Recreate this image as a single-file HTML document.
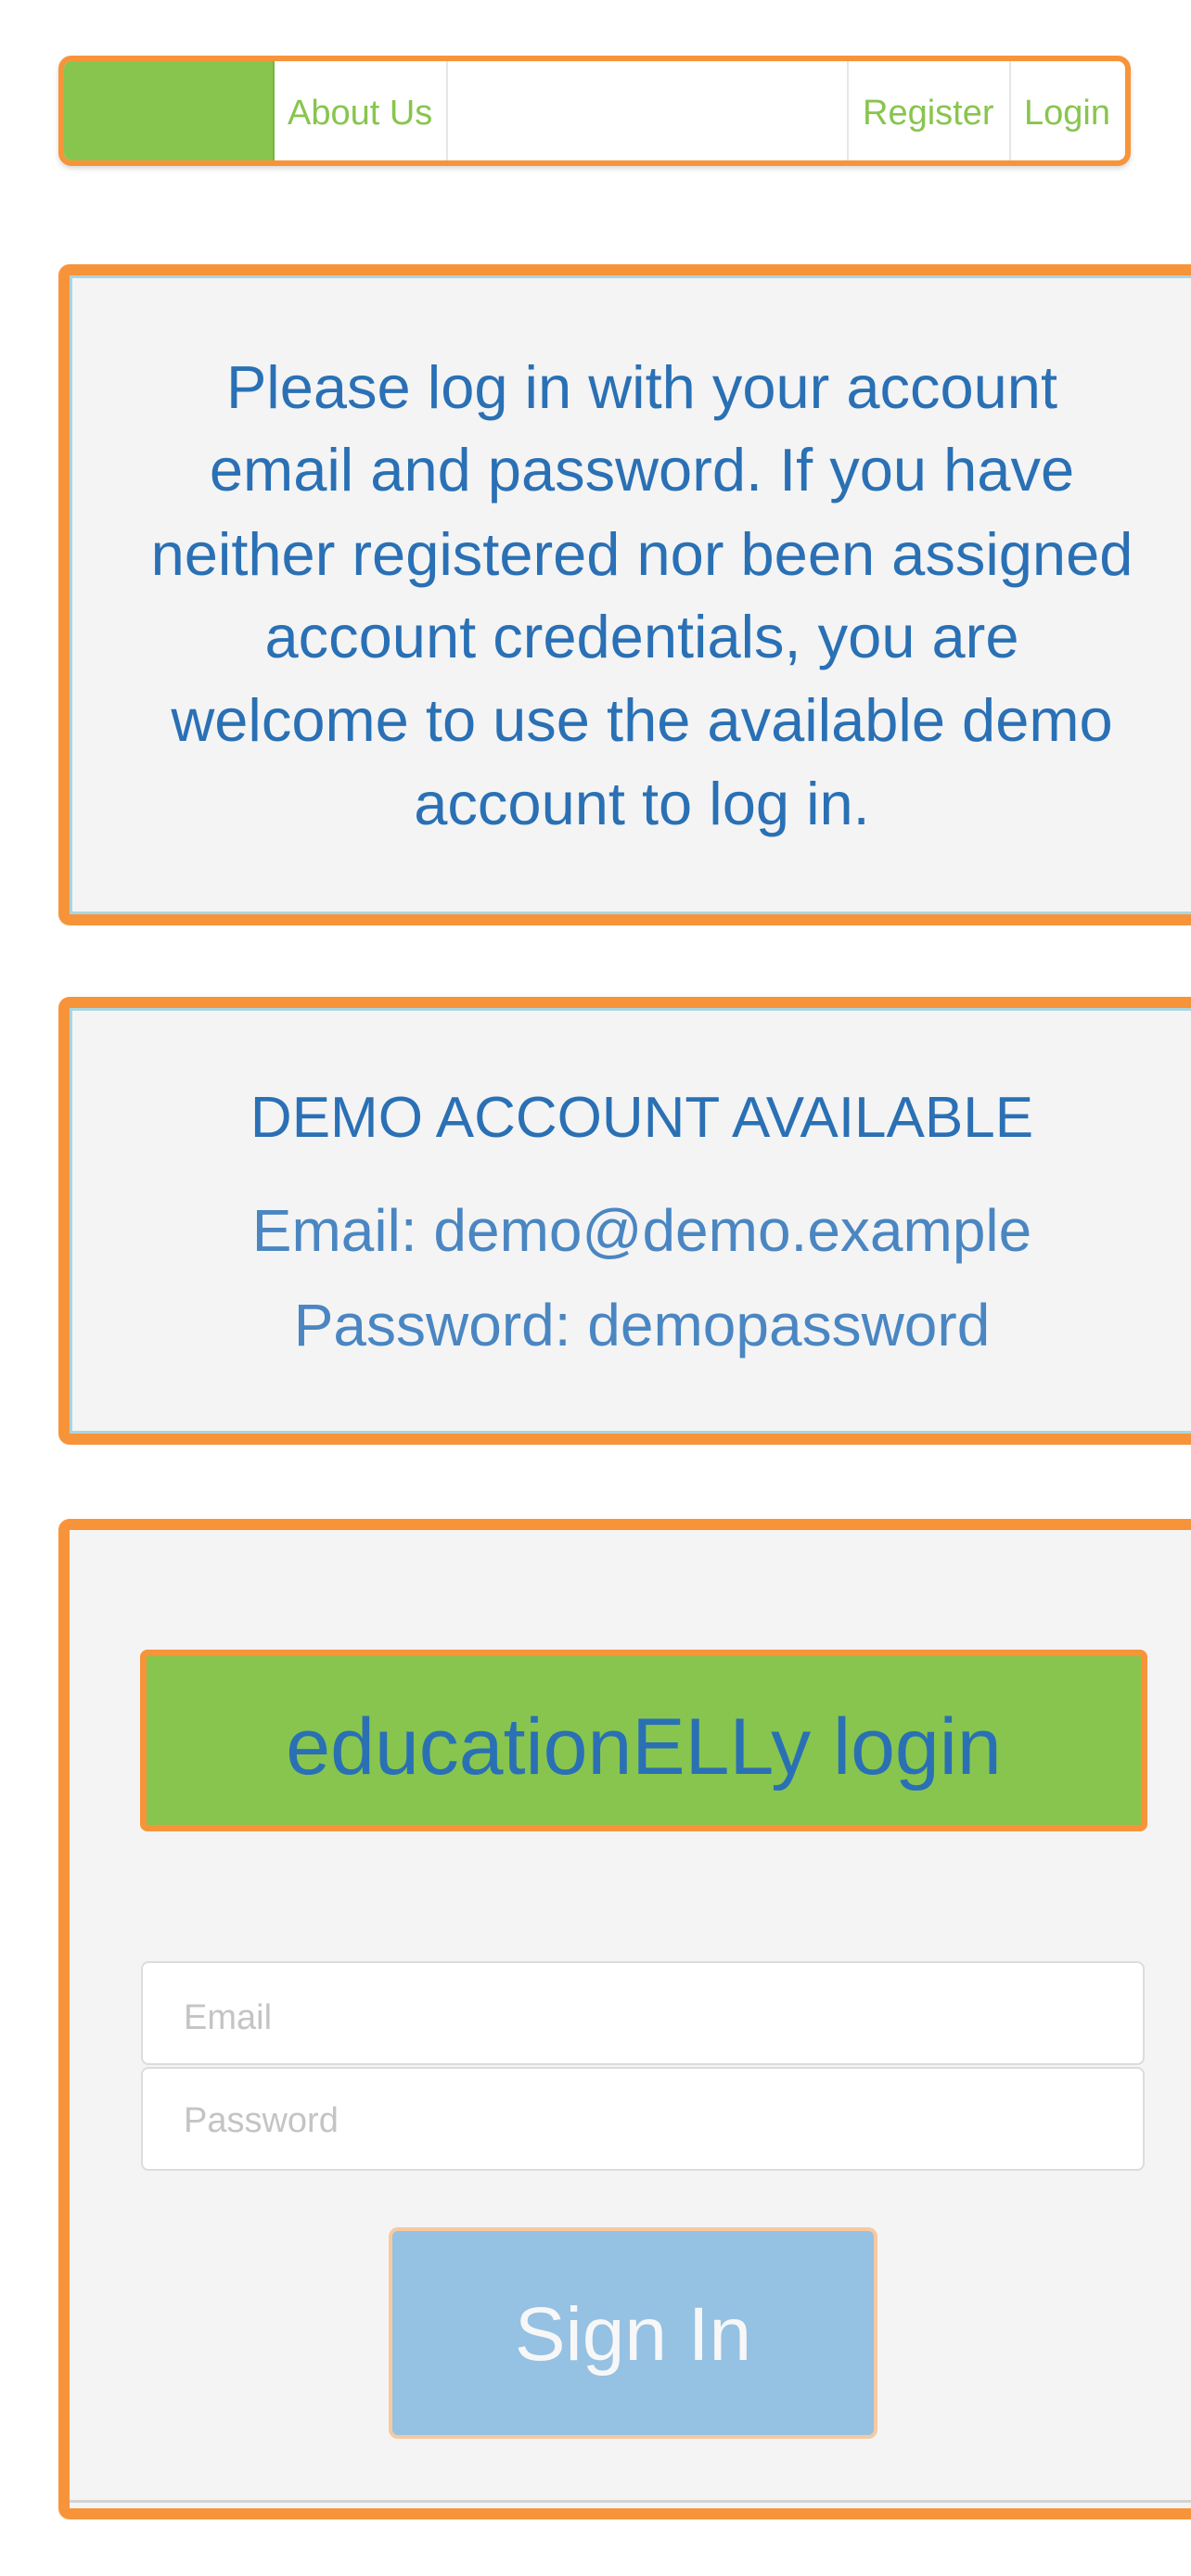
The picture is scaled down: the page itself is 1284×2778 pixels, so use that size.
<!DOCTYPE html>
<html><head><meta charset="utf-8"><style>
html,body{margin:0;padding:0;width:1284px;height:2778px;overflow:hidden;background:#fff;font-family:"Liberation Sans",sans-serif;}
.a{position:absolute;white-space:nowrap;}
.c{left:64px;width:1256px;text-align:center;}
</style></head><body>
<!-- nav -->
<div class="a" style="left:63px;top:60px;width:1144px;height:107px;border:6px solid #f7943a;border-radius:14px;background:#fff;box-shadow:0 3px 6px rgba(0,0,0,.15);overflow:hidden;">
 <div class="a" style="left:0;top:0;width:225px;height:107px;background:#88c54e;border-right:2px solid #79b345;"></div>
 <div class="a" style="left:412px;top:0;width:2px;height:107px;background:#e6e6e6;"></div>
 <div class="a" style="left:844px;top:0;width:2px;height:107px;background:#e6e6e6;"></div>
 <div class="a" style="left:1019px;top:0;width:2px;height:107px;background:#e6e6e6;"></div>
</div>
<div class="a" style="left:310px;top:103px;font-size:38px;line-height:38px;color:#88c54e;">About Us</div>
<div class="a" style="left:930px;top:103px;font-size:38px;line-height:38px;color:#88c54e;">Register</div>
<div class="a" style="left:1104px;top:103px;font-size:38px;line-height:38px;color:#88c54e;">Login</div>

<!-- box1 -->
<div class="a" style="left:63px;top:285px;width:1260px;height:689px;border:12px solid #f7943a;border-radius:12px;background:#f4f4f4;">
 <div class="a" style="left:0;top:0;right:0;bottom:0;border:3px solid #a9d6df;"></div>
</div>
<div class="a c" style="top:385px;font-size:65px;line-height:65px;color:#2a70b5;">Please log in with your account</div>
<div class="a c" style="top:474px;font-size:65px;line-height:65px;color:#2a70b5;">email and password. If you have</div>
<div class="a c" style="top:565px;font-size:65px;line-height:65px;color:#2a70b5;">neither registered nor been assigned</div>
<div class="a c" style="top:654px;font-size:65px;line-height:65px;color:#2a70b5;">account credentials, you are</div>
<div class="a c" style="top:744px;font-size:65px;line-height:65px;color:#2a70b5;">welcome to use the available demo</div>
<div class="a c" style="top:834px;font-size:65px;line-height:65px;color:#2a70b5;">account to log in.</div>

<!-- box2 -->
<div class="a" style="left:63px;top:1075px;width:1260px;height:459px;border:12px solid #f7943a;border-radius:12px;background:#f4f4f4;">
 <div class="a" style="left:0;top:0;right:0;bottom:0;border:3px solid #a9d6df;"></div>
</div>
<div class="a c" style="top:1175px;font-size:62px;line-height:62px;color:#2a70b5;">DEMO ACCOUNT AVAILABLE</div>
<div class="a c" style="top:1295px;font-size:64px;line-height:64px;color:#4a86c2;">Email: demo@demo.example</div>
<div class="a c" style="top:1397px;font-size:64px;line-height:64px;color:#4a86c2;">Password: demopassword</div>

<!-- box3 -->
<div class="a" style="left:63px;top:1638px;width:1260px;height:1055px;border:12px solid #f7943a;border-radius:12px;background:#f4f4f4;">
 <div class="a" style="left:0;right:0;bottom:0;height:6px;border-top:3px solid #d2d2d2;background:#f4f4f4;"></div>
</div>
<div class="a" style="left:151px;top:1779px;width:1072px;height:182px;border:7px solid #f7943a;border-radius:8px;background:#88c54e;"></div>
<div class="a" style="left:151px;width:1086px;text-align:center;top:1841px;font-size:86px;line-height:86px;color:#2a70b5;">educationELLy login</div>

<div class="a" style="left:152px;top:2115px;width:1078px;height:108px;border:2px solid #dcdcdc;border-radius:8px;background:#fff;"></div>
<div class="a" style="left:152px;top:2229px;width:1078px;height:108px;border:2px solid #dcdcdc;border-radius:8px;background:#fff;"></div>
<div class="a" style="left:198px;top:2157px;font-size:38px;line-height:38px;color:#c4c4c4;">Email</div>
<div class="a" style="left:198px;top:2268px;font-size:38px;line-height:38px;color:#c4c4c4;">Password</div>

<div class="a" style="left:419px;top:2402px;width:519px;height:220px;border:4px solid #f7c9a0;border-radius:10px;background:#95c1e3;"></div>
<div class="a" style="left:419px;width:527px;text-align:center;top:2477px;font-size:82px;line-height:82px;color:#f7f7f7;">Sign In</div>
</body></html>
